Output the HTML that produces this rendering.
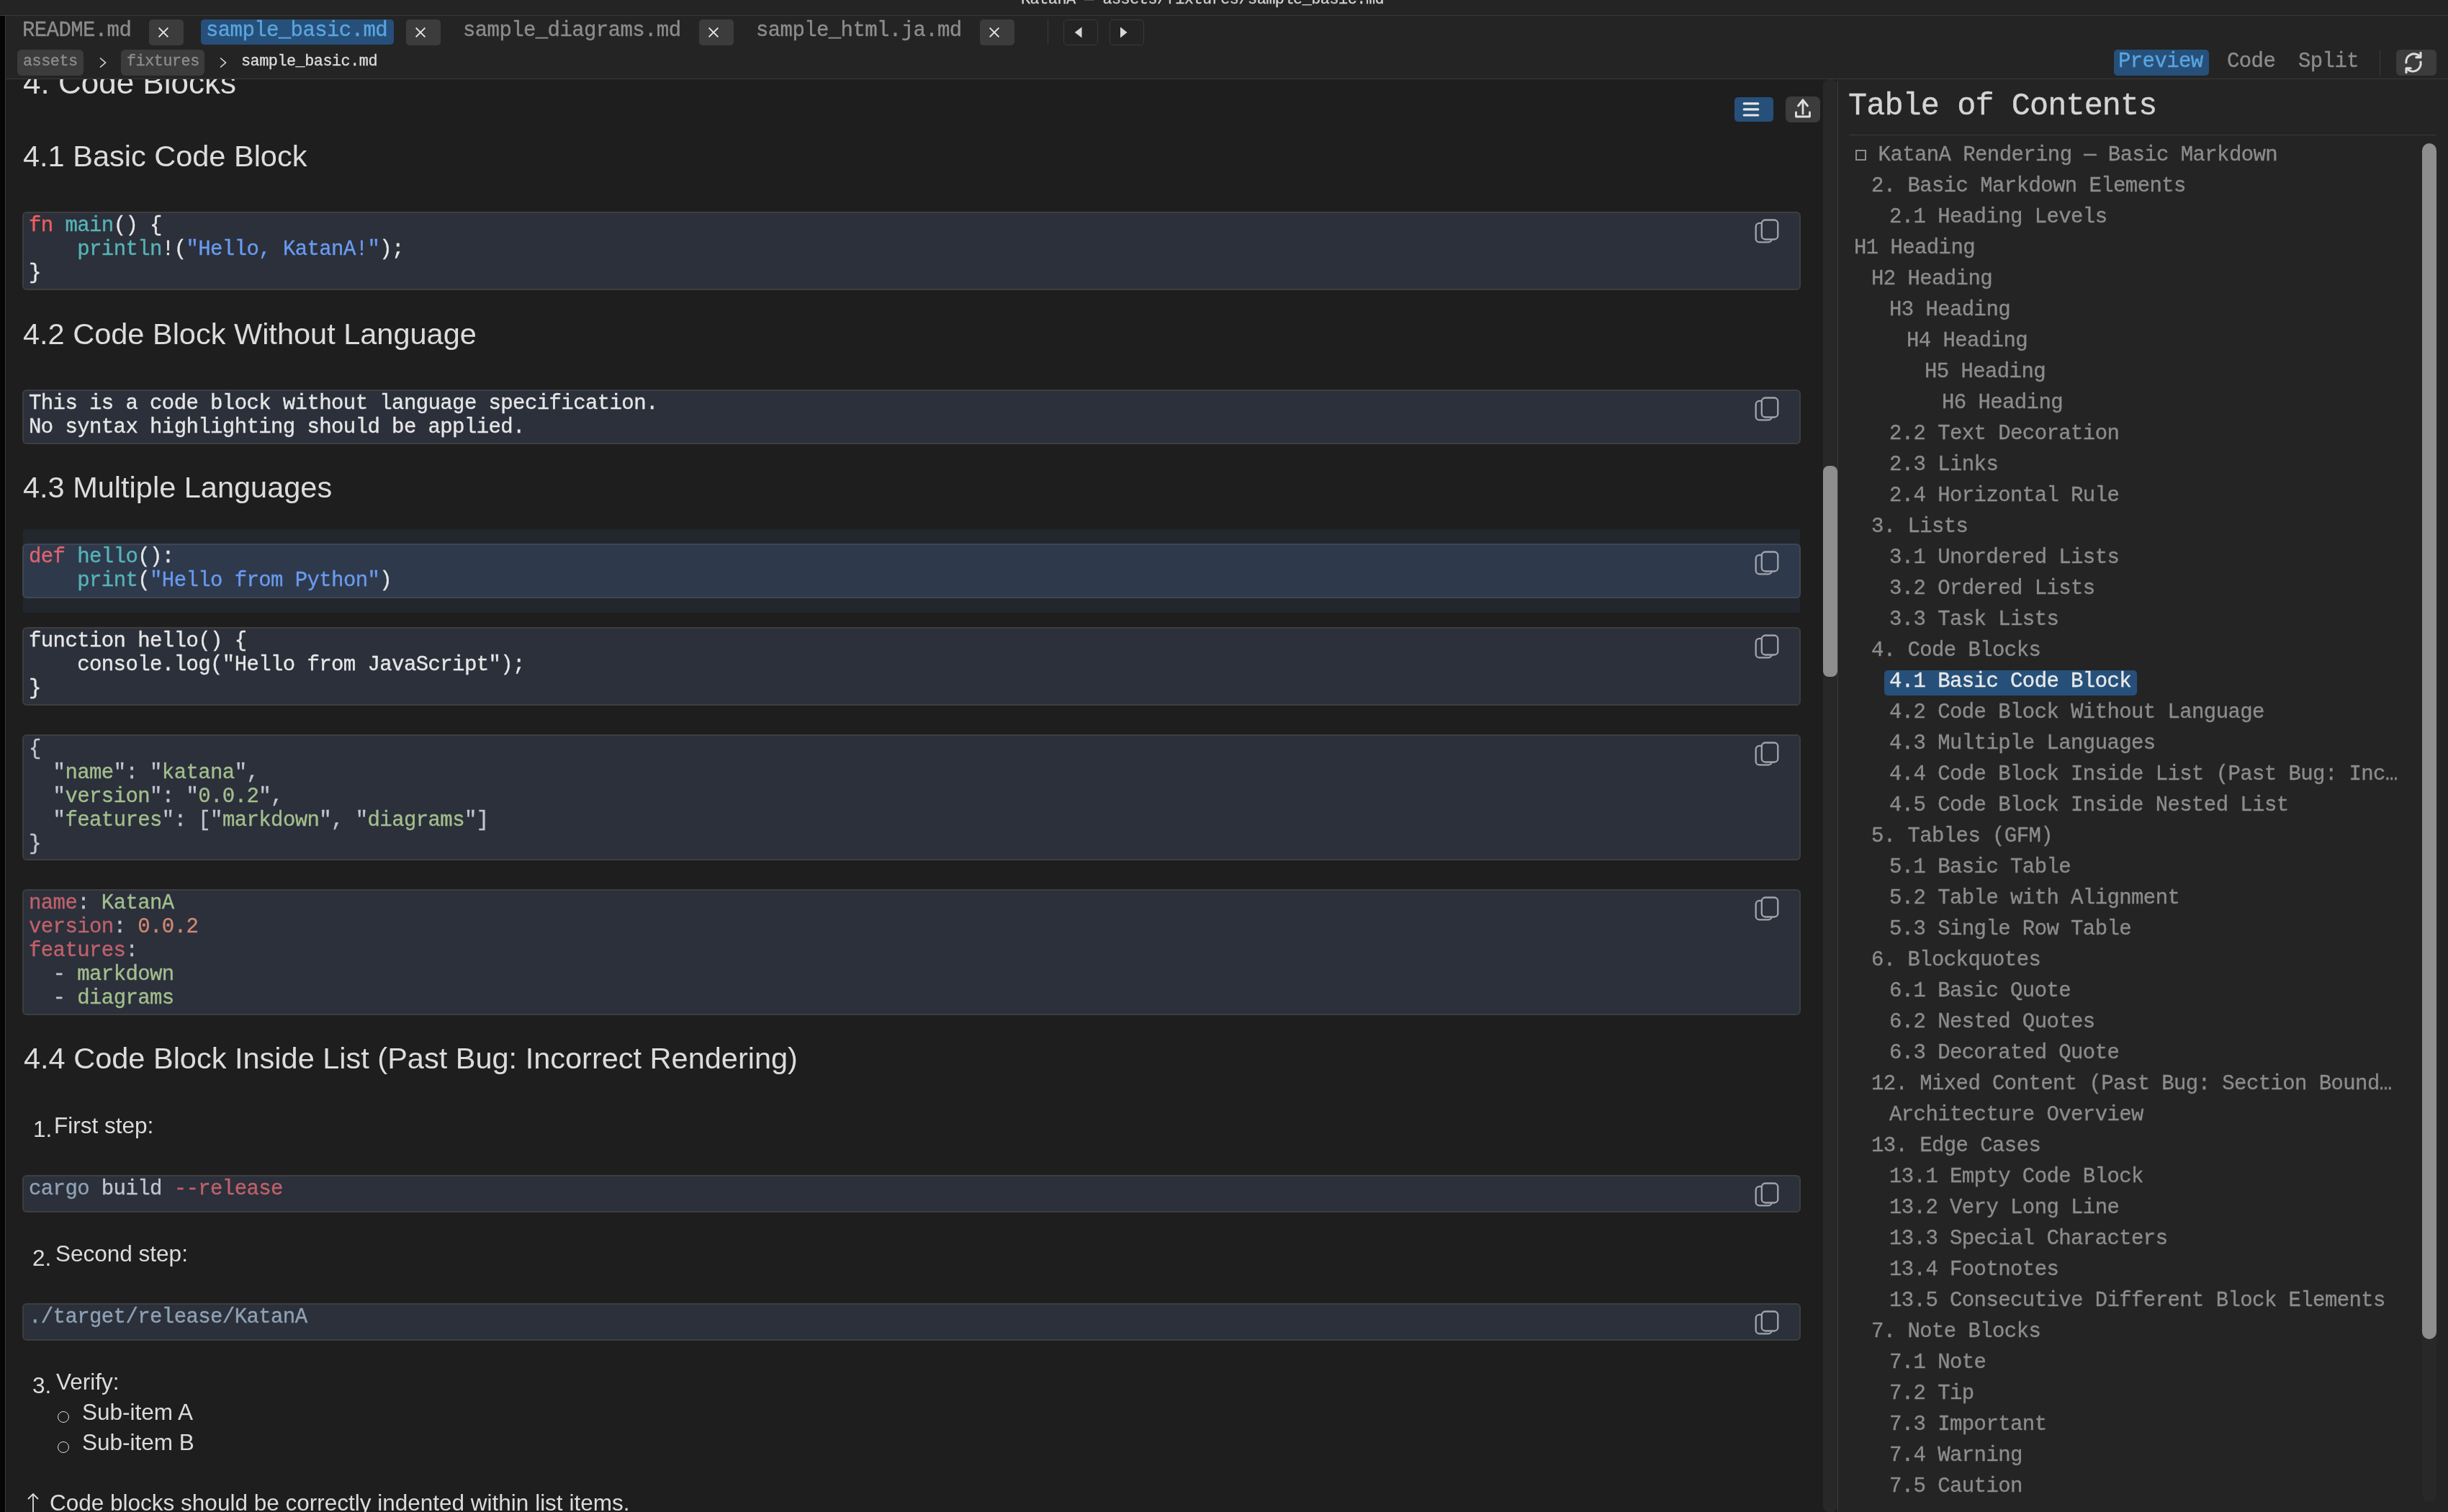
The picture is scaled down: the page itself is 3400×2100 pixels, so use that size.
<!DOCTYPE html>
<html><head><meta charset="utf-8"><style>
html,body{margin:0;padding:0;}
body{width:3400px;height:2100px;overflow:hidden;position:relative;background:#1e1e1e;font-family:"Liberation Sans",sans-serif;}
.t{will-change:transform;}
</style></head><body>
<div style="position:absolute;left:0px;top:0px;width:3400px;height:21px;background:#242424;border-radius:0px;"></div>
<div style="position:absolute;left:0px;top:21px;width:3400px;height:1px;background:#3a3a3a;border-radius:0px;"></div>
<div style="position:absolute;left:0px;top:22px;width:3400px;height:87px;background:#242424;border-radius:0px;"></div>
<div style="position:absolute;left:0px;top:109px;width:3400px;height:1px;background:#3a3a3a;border-radius:0px;"></div>
<div style="position:absolute;left:0px;top:22px;width:7px;height:2078px;background:#050505;border-radius:0px;"></div>
<div style="position:absolute;left:7px;top:22px;width:1px;height:2078px;background:#3a3a3a;border-radius:0px;"></div>
<div style="position:absolute;left:8px;top:110px;width:2524px;height:1990px;background:#1e1e1e;border-radius:0px;"></div>
<div style="position:absolute;left:2553px;top:110px;width:847px;height:1990px;background:#242424;border-radius:0px;"></div>
<div style="position:absolute;left:2552px;top:110px;width:1px;height:1990px;background:#3a3a3a;border-radius:0px;"></div>
<div style="position:absolute;left:2532px;top:110px;width:20px;height:1990px;background:#282828;border-radius:8px;"></div>
<div style="position:absolute;left:2532px;top:647px;width:20px;height:293px;background:#8e8e8e;border-radius:8px;"></div>
<div style="position:absolute;left:207px;top:27px;width:48px;height:36px;background:#3c3c3c;border-radius:5px;"></div>
<svg style="position:absolute;left:219.0px;top:37px" width="16" height="16" viewBox="0 0 16 16"><path d="M1.6 1.6L14.4 14.4M14.4 1.6L1.6 14.4" stroke="#e6e6e6" stroke-width="1.9" fill="none"/></svg>
<div style="position:absolute;left:279px;top:27px;width:268px;height:35px;background:#26507a;border-radius:5px;"></div>
<div style="position:absolute;left:564px;top:27px;width:48px;height:36px;background:#3c3c3c;border-radius:5px;"></div>
<svg style="position:absolute;left:576.0px;top:37px" width="16" height="16" viewBox="0 0 16 16"><path d="M1.6 1.6L14.4 14.4M14.4 1.6L1.6 14.4" stroke="#e6e6e6" stroke-width="1.9" fill="none"/></svg>
<div style="position:absolute;left:971px;top:27px;width:48px;height:36px;background:#3c3c3c;border-radius:5px;"></div>
<svg style="position:absolute;left:983.0px;top:37px" width="16" height="16" viewBox="0 0 16 16"><path d="M1.6 1.6L14.4 14.4M14.4 1.6L1.6 14.4" stroke="#e6e6e6" stroke-width="1.9" fill="none"/></svg>
<div style="position:absolute;left:1361px;top:27px;width:48px;height:36px;background:#3c3c3c;border-radius:5px;"></div>
<svg style="position:absolute;left:1373.0px;top:37px" width="16" height="16" viewBox="0 0 16 16"><path d="M1.6 1.6L14.4 14.4M14.4 1.6L1.6 14.4" stroke="#e6e6e6" stroke-width="1.9" fill="none"/></svg>
<div style="position:absolute;left:1455px;top:26px;width:1px;height:36px;background:#3a3a3a;border-radius:0px;"></div>
<div style="position:absolute;left:1477px;top:27px;width:48px;height:36px;background:none;border-radius:5px;border:1px solid #3a3a3a;box-sizing:border-box;"></div>
<div style="position:absolute;left:1541px;top:27px;width:48px;height:36px;background:none;border-radius:5px;border:1px solid #3a3a3a;box-sizing:border-box;"></div>
<svg style="position:absolute;left:1490px;top:35px" width="14" height="20"><path d="M12.5 2.5L12.5 17.4L2.7 10Z" fill="#d8d8d8"/></svg>
<svg style="position:absolute;left:1554px;top:35px" width="14" height="20"><path d="M2 2.5L2 17.4L11.5 10Z" fill="#d8d8d8"/></svg>
<div style="position:absolute;left:24px;top:69px;width:92px;height:36px;background:#3c3c3c;border-radius:6px;"></div>
<svg style="position:absolute;left:137px;top:79px" width="12" height="16"><path d="M2 1.5L9.5 8L2 14.5" stroke="#d8d8d8" stroke-width="1.6" fill="none"/></svg>
<div style="position:absolute;left:168px;top:69px;width:116px;height:36px;background:#3c3c3c;border-radius:6px;"></div>
<svg style="position:absolute;left:304px;top:79px" width="12" height="16"><path d="M2 1.5L9.5 8L2 14.5" stroke="#d8d8d8" stroke-width="1.6" fill="none"/></svg>
<div style="position:absolute;left:2936px;top:69px;width:132px;height:36px;background:#26507a;border-radius:5px;"></div>
<div style="position:absolute;left:3305px;top:69px;width:1px;height:36px;background:#3a3a3a;border-radius:0px;"></div>
<div style="position:absolute;left:3328px;top:69px;width:56px;height:36px;background:#3c3c3c;border-radius:6px;"></div>
<svg style="position:absolute;left:3330px;top:68px" width="40" height="40"><g stroke="#dcdcdc" stroke-width="3.1" fill="none" stroke-linecap="round" stroke-linejoin="round"><path d="M11.9 19A11 11 0 0 1 30.8 10.2"/><path d="M32 5.2V11.6H25.8"/><path d="M32 18A11 11 0 0 1 13.2 27.6"/><path d="M12 32.8V26.8H18.2"/></g></svg>
<div style="position:absolute;left:8px;top:110px;width:2524px;height:60px;overflow:hidden">
<div class="t" style="position:absolute;left:23.8px;top:-23.0px;font-family:'Liberation Sans';font-size:44px;line-height:55px;color:#dcdcdc;white-space:pre;">4. Code Blocks</div>
</div>
<div style="position:absolute;left:2409px;top:135px;width:54px;height:34px;background:#26507a;border-radius:5px;"></div>
<svg style="position:absolute;left:2418px;top:140px" width="28" height="24"><g stroke="#e8e6e3" stroke-width="3.2" stroke-linecap="round"><path d="M4.3 3.9H23.7"/><path d="M4.3 11.9H23.7"/><path d="M4.3 20H23.7"/></g></svg>
<div style="position:absolute;left:2480px;top:134px;width:48px;height:36px;background:#3c3c3c;border-radius:7px;"></div>
<svg style="position:absolute;left:2490px;top:136px" width="28" height="30"><g stroke="#e0e0e0" stroke-width="2.8" fill="none" stroke-linecap="round" stroke-linejoin="round"><path d="M14 3V22"/><path d="M7.5 11L14 3L20.5 11"/><path d="M4.5 20V26H23.5V20"/></g></svg>
<div style="position:absolute;left:31px;top:294px;width:2470px;height:109px;background:#2b303b;border-radius:6px;border:2px solid #3e3e3e;box-sizing:border-box;"></div>
<svg style="position:absolute;left:2430px;top:294px" width="50" height="50"><g stroke="#a0a4ab" stroke-width="2.3"><rect x="8.7" y="15.9" width="22.2" height="26.5" rx="5" fill="none"/><rect x="16.8" y="11.5" width="22.5" height="27" rx="5" fill="#2b303b"/></g></svg>
<div style="position:absolute;left:31px;top:541px;width:2470px;height:76px;background:#2b303b;border-radius:6px;border:2px solid #3e3e3e;box-sizing:border-box;"></div>
<svg style="position:absolute;left:2430px;top:541px" width="50" height="50"><g stroke="#a0a4ab" stroke-width="2.3"><rect x="8.7" y="15.9" width="22.2" height="26.5" rx="5" fill="none"/><rect x="16.8" y="11.5" width="22.5" height="27" rx="5" fill="#2b303b"/></g></svg>
<div style="position:absolute;left:32px;top:735px;width:2468px;height:116px;background:#22272e;border-radius:3px;"></div>
<div style="position:absolute;left:31px;top:755px;width:2470px;height:76px;background:#2e3a4c;border-radius:6px;border:2px solid #3f4650;box-sizing:border-box;"></div>
<svg style="position:absolute;left:2430px;top:755px" width="50" height="50"><g stroke="#a0a4ab" stroke-width="2.3"><rect x="8.7" y="15.9" width="22.2" height="26.5" rx="5" fill="none"/><rect x="16.8" y="11.5" width="22.5" height="27" rx="5" fill="#2e3a4c"/></g></svg>
<div style="position:absolute;left:31px;top:871px;width:2470px;height:109px;background:#2b303b;border-radius:6px;border:2px solid #3e3e3e;box-sizing:border-box;"></div>
<svg style="position:absolute;left:2430px;top:871px" width="50" height="50"><g stroke="#a0a4ab" stroke-width="2.3"><rect x="8.7" y="15.9" width="22.2" height="26.5" rx="5" fill="none"/><rect x="16.8" y="11.5" width="22.5" height="27" rx="5" fill="#2b303b"/></g></svg>
<div style="position:absolute;left:31px;top:1020px;width:2470px;height:175px;background:#2b303b;border-radius:6px;border:2px solid #3e3e3e;box-sizing:border-box;"></div>
<svg style="position:absolute;left:2430px;top:1020px" width="50" height="50"><g stroke="#a0a4ab" stroke-width="2.3"><rect x="8.7" y="15.9" width="22.2" height="26.5" rx="5" fill="none"/><rect x="16.8" y="11.5" width="22.5" height="27" rx="5" fill="#2b303b"/></g></svg>
<div style="position:absolute;left:31px;top:1235px;width:2470px;height:175px;background:#2b303b;border-radius:6px;border:2px solid #3e3e3e;box-sizing:border-box;"></div>
<svg style="position:absolute;left:2430px;top:1235px" width="50" height="50"><g stroke="#a0a4ab" stroke-width="2.3"><rect x="8.7" y="15.9" width="22.2" height="26.5" rx="5" fill="none"/><rect x="16.8" y="11.5" width="22.5" height="27" rx="5" fill="#2b303b"/></g></svg>
<div style="position:absolute;left:31px;top:1632px;width:2470px;height:52px;background:#2b303b;border-radius:6px;border:2px solid #3e3e3e;box-sizing:border-box;"></div>
<svg style="position:absolute;left:2430px;top:1632px" width="50" height="50"><g stroke="#a0a4ab" stroke-width="2.3"><rect x="8.7" y="15.9" width="22.2" height="26.5" rx="5" fill="none"/><rect x="16.8" y="11.5" width="22.5" height="27" rx="5" fill="#2b303b"/></g></svg>
<div style="position:absolute;left:31px;top:1810px;width:2470px;height:52px;background:#2b303b;border-radius:6px;border:2px solid #3e3e3e;box-sizing:border-box;"></div>
<svg style="position:absolute;left:2430px;top:1810px" width="50" height="50"><g stroke="#a0a4ab" stroke-width="2.3"><rect x="8.7" y="15.9" width="22.2" height="26.5" rx="5" fill="none"/><rect x="16.8" y="11.5" width="22.5" height="27" rx="5" fill="#2b303b"/></g></svg>
<div style="position:absolute;left:80px;top:1960px;width:16px;height:16px;border:1.5px solid #dcdcdc;border-radius:50%;box-sizing:border-box"></div>
<div style="position:absolute;left:80px;top:2001.5px;width:16px;height:16px;border:1.5px solid #dcdcdc;border-radius:50%;box-sizing:border-box"></div>
<svg style="position:absolute;left:36px;top:2072px" width="20" height="30"><g stroke="#dcdcdc" stroke-width="1.8" fill="none"><path d="M10 3V30"/><path d="M3 10L10 3L17 10"/></g></svg>
<div style="position:absolute;left:2568px;top:187px;width:816px;height:1px;background:#3a3a3a;border-radius:0px;"></div>
<div style="position:absolute;left:3364px;top:199px;width:20px;height:1887px;background:#282828;border-radius:10px;"></div>
<div style="position:absolute;left:3364px;top:199px;width:20px;height:1661px;background:#8e8e8e;border-radius:10px;"></div>
<div style="position:absolute;left:2577px;top:208px;width:15px;height:15px;background:none;border-radius:0px;border:2px solid #8c8c8c;box-sizing:border-box;"></div>
<div style="position:absolute;left:2617px;top:931px;width:351px;height:35px;background:#26507a;border-radius:5px;"></div>
<div class="t" style="position:absolute;left:1418.0px;top:-14.5px;font-family:'Liberation Mono';font-size:21.75px;line-height:27px;color:#d0d0d0;white-space:pre;letter-spacing:-0.450px;-webkit-text-stroke:0.35px currentColor;">KatanA — assets/fixtures/sample_basic.md</div>
<div class="t" style="position:absolute;left:30.8px;top:25.0px;font-family:'Liberation Mono';font-size:29.0px;line-height:36px;color:#8c8c8c;white-space:pre;letter-spacing:-0.600px;-webkit-text-stroke:0.35px currentColor;">README.md</div>
<div class="t" style="position:absolute;left:285.7px;top:25.0px;font-family:'Liberation Mono';font-size:29.0px;line-height:36px;color:#5aa5e0;white-space:pre;letter-spacing:-0.600px;-webkit-text-stroke:0.35px currentColor;">sample_basic.md</div>
<div class="t" style="position:absolute;left:642.7px;top:25.0px;font-family:'Liberation Mono';font-size:29.0px;line-height:36px;color:#8c8c8c;white-space:pre;letter-spacing:-0.600px;-webkit-text-stroke:0.35px currentColor;">sample_diagrams.md</div>
<div class="t" style="position:absolute;left:1050.4px;top:25.0px;font-family:'Liberation Mono';font-size:29.0px;line-height:36px;color:#8c8c8c;white-space:pre;letter-spacing:-0.600px;-webkit-text-stroke:0.35px currentColor;">sample_html.ja.md</div>
<div class="t" style="position:absolute;left:32.0px;top:72.0px;font-family:'Liberation Mono';font-size:21.75px;line-height:27px;color:#8c8c8c;white-space:pre;letter-spacing:-0.450px;-webkit-text-stroke:0.35px currentColor;">assets</div>
<div class="t" style="position:absolute;left:176.4px;top:72.0px;font-family:'Liberation Mono';font-size:21.75px;line-height:27px;color:#8c8c8c;white-space:pre;letter-spacing:-0.450px;-webkit-text-stroke:0.35px currentColor;">fixtures</div>
<div class="t" style="position:absolute;left:335.3px;top:72.0px;font-family:'Liberation Mono';font-size:21.75px;line-height:27px;color:#dcdcdc;white-space:pre;letter-spacing:-0.450px;-webkit-text-stroke:0.35px currentColor;">sample_basic.md</div>
<div class="t" style="position:absolute;left:2942.3px;top:68.2px;font-family:'Liberation Mono';font-size:29.0px;line-height:36px;color:#5aa5e0;white-space:pre;letter-spacing:-0.600px;-webkit-text-stroke:0.35px currentColor;">Preview</div>
<div class="t" style="position:absolute;left:3093.0px;top:68.2px;font-family:'Liberation Mono';font-size:29.0px;line-height:36px;color:#8c8c8c;white-space:pre;letter-spacing:-0.600px;-webkit-text-stroke:0.35px currentColor;">Code</div>
<div class="t" style="position:absolute;left:3192.4px;top:68.2px;font-family:'Liberation Mono';font-size:29.0px;line-height:36px;color:#8c8c8c;white-space:pre;letter-spacing:-0.600px;-webkit-text-stroke:0.35px currentColor;">Split</div>
<div class="t" style="position:absolute;left:31.9px;top:190.6px;font-family:'Liberation Sans';font-size:41.5px;line-height:52px;color:#dcdcdc;white-space:pre;">4.1 Basic Code Block</div>
<div class="t" style="position:absolute;left:40.3px;top:296.0px;font-family:'Liberation Mono';font-size:29.0px;line-height:36px;color:#dcdcdc;white-space:pre;letter-spacing:-0.600px;-webkit-text-stroke:0.35px currentColor;"><span style="color:#f0605c">fn</span><span style="color:#e6e6e6"> </span><span style="color:#56b4b8">main</span><span style="color:#e6e6e6">() {</span></div>
<div class="t" style="position:absolute;left:40.3px;top:329.0px;font-family:'Liberation Mono';font-size:29.0px;line-height:36px;color:#dcdcdc;white-space:pre;letter-spacing:-0.600px;-webkit-text-stroke:0.35px currentColor;"><span style="color:#e6e6e6">    </span><span style="color:#56b4b8">println</span><span style="color:#e6e6e6">!(</span><span style="color:#6a9af0">&quot;Hello, KatanA!&quot;</span><span style="color:#e6e6e6">);</span></div>
<div class="t" style="position:absolute;left:40.3px;top:362.0px;font-family:'Liberation Mono';font-size:29.0px;line-height:36px;color:#dcdcdc;white-space:pre;letter-spacing:-0.600px;-webkit-text-stroke:0.35px currentColor;"><span style="color:#e6e6e6">}</span></div>
<div class="t" style="position:absolute;left:31.5px;top:437.8px;font-family:'Liberation Sans';font-size:41.5px;line-height:52px;color:#dcdcdc;white-space:pre;">4.2 Code Block Without Language</div>
<div class="t" style="position:absolute;left:40.3px;top:543.4px;font-family:'Liberation Mono';font-size:29.0px;line-height:36px;color:#dcdcdc;white-space:pre;letter-spacing:-0.600px;-webkit-text-stroke:0.35px currentColor;"><span style="color:#e6e6e6">This is a code block without language specification.</span></div>
<div class="t" style="position:absolute;left:40.3px;top:576.4px;font-family:'Liberation Mono';font-size:29.0px;line-height:36px;color:#dcdcdc;white-space:pre;letter-spacing:-0.600px;-webkit-text-stroke:0.35px currentColor;"><span style="color:#e6e6e6">No syntax highlighting should be applied.</span></div>
<div class="t" style="position:absolute;left:31.7px;top:651.4px;font-family:'Liberation Sans';font-size:41.5px;line-height:52px;color:#dcdcdc;white-space:pre;">4.3 Multiple Languages</div>
<div class="t" style="position:absolute;left:40.3px;top:756.2px;font-family:'Liberation Mono';font-size:29.0px;line-height:36px;color:#dcdcdc;white-space:pre;letter-spacing:-0.600px;-webkit-text-stroke:0.35px currentColor;"><span style="color:#e0636c">def</span><span style="color:#e6e6e6"> </span><span style="color:#56b4b8">hello</span><span style="color:#e6e6e6">():</span></div>
<div class="t" style="position:absolute;left:40.3px;top:789.2px;font-family:'Liberation Mono';font-size:29.0px;line-height:36px;color:#dcdcdc;white-space:pre;letter-spacing:-0.600px;-webkit-text-stroke:0.35px currentColor;"><span style="color:#e6e6e6">    </span><span style="color:#56b4b8">print</span><span style="color:#e6e6e6">(</span><span style="color:#6a9af0">&quot;Hello from Python&quot;</span><span style="color:#e6e6e6">)</span></div>
<div class="t" style="position:absolute;left:40.3px;top:873.4px;font-family:'Liberation Mono';font-size:29.0px;line-height:36px;color:#dcdcdc;white-space:pre;letter-spacing:-0.600px;-webkit-text-stroke:0.35px currentColor;"><span style="color:#e6e6e6">function hello() {</span></div>
<div class="t" style="position:absolute;left:40.3px;top:906.4px;font-family:'Liberation Mono';font-size:29.0px;line-height:36px;color:#dcdcdc;white-space:pre;letter-spacing:-0.600px;-webkit-text-stroke:0.35px currentColor;"><span style="color:#e6e6e6">    console.log(&quot;Hello from JavaScript&quot;);</span></div>
<div class="t" style="position:absolute;left:40.3px;top:939.4px;font-family:'Liberation Mono';font-size:29.0px;line-height:36px;color:#dcdcdc;white-space:pre;letter-spacing:-0.600px;-webkit-text-stroke:0.35px currentColor;"><span style="color:#e6e6e6">}</span></div>
<div class="t" style="position:absolute;left:40.3px;top:1023.2px;font-family:'Liberation Mono';font-size:29.0px;line-height:36px;color:#dcdcdc;white-space:pre;letter-spacing:-0.600px;-webkit-text-stroke:0.35px currentColor;"><span style="color:#c0c5ce">{</span></div>
<div class="t" style="position:absolute;left:40.3px;top:1056.2px;font-family:'Liberation Mono';font-size:29.0px;line-height:36px;color:#dcdcdc;white-space:pre;letter-spacing:-0.600px;-webkit-text-stroke:0.35px currentColor;"><span style="color:#c0c5ce">  &quot;</span><span style="color:#a3be8c">name</span><span style="color:#c0c5ce">&quot;: &quot;</span><span style="color:#a3be8c">katana</span><span style="color:#c0c5ce">&quot;,</span></div>
<div class="t" style="position:absolute;left:40.3px;top:1089.2px;font-family:'Liberation Mono';font-size:29.0px;line-height:36px;color:#dcdcdc;white-space:pre;letter-spacing:-0.600px;-webkit-text-stroke:0.35px currentColor;"><span style="color:#c0c5ce">  &quot;</span><span style="color:#a3be8c">version</span><span style="color:#c0c5ce">&quot;: &quot;</span><span style="color:#a3be8c">0.0.2</span><span style="color:#c0c5ce">&quot;,</span></div>
<div class="t" style="position:absolute;left:40.3px;top:1122.2px;font-family:'Liberation Mono';font-size:29.0px;line-height:36px;color:#dcdcdc;white-space:pre;letter-spacing:-0.600px;-webkit-text-stroke:0.35px currentColor;"><span style="color:#c0c5ce">  &quot;</span><span style="color:#a3be8c">features</span><span style="color:#c0c5ce">&quot;: [&quot;</span><span style="color:#a3be8c">markdown</span><span style="color:#c0c5ce">&quot;, &quot;</span><span style="color:#a3be8c">diagrams</span><span style="color:#c0c5ce">&quot;]</span></div>
<div class="t" style="position:absolute;left:40.3px;top:1155.2px;font-family:'Liberation Mono';font-size:29.0px;line-height:36px;color:#dcdcdc;white-space:pre;letter-spacing:-0.600px;-webkit-text-stroke:0.35px currentColor;"><span style="color:#c0c5ce">}</span></div>
<div class="t" style="position:absolute;left:40.3px;top:1236.8px;font-family:'Liberation Mono';font-size:29.0px;line-height:36px;color:#dcdcdc;white-space:pre;letter-spacing:-0.600px;-webkit-text-stroke:0.35px currentColor;"><span style="color:#bf616a">name</span><span style="color:#c0c5ce">: </span><span style="color:#a3be8c">KatanA</span></div>
<div class="t" style="position:absolute;left:40.3px;top:1269.8px;font-family:'Liberation Mono';font-size:29.0px;line-height:36px;color:#dcdcdc;white-space:pre;letter-spacing:-0.600px;-webkit-text-stroke:0.35px currentColor;"><span style="color:#bf616a">version</span><span style="color:#c0c5ce">: </span><span style="color:#d08770">0.0.2</span></div>
<div class="t" style="position:absolute;left:40.3px;top:1302.8px;font-family:'Liberation Mono';font-size:29.0px;line-height:36px;color:#dcdcdc;white-space:pre;letter-spacing:-0.600px;-webkit-text-stroke:0.35px currentColor;"><span style="color:#bf616a">features</span><span style="color:#c0c5ce">:</span></div>
<div class="t" style="position:absolute;left:40.3px;top:1335.8px;font-family:'Liberation Mono';font-size:29.0px;line-height:36px;color:#dcdcdc;white-space:pre;letter-spacing:-0.600px;-webkit-text-stroke:0.35px currentColor;"><span style="color:#c0c5ce">  - </span><span style="color:#a3be8c">markdown</span></div>
<div class="t" style="position:absolute;left:40.3px;top:1368.8px;font-family:'Liberation Mono';font-size:29.0px;line-height:36px;color:#dcdcdc;white-space:pre;letter-spacing:-0.600px;-webkit-text-stroke:0.35px currentColor;"><span style="color:#c0c5ce">  - </span><span style="color:#a3be8c">diagrams</span></div>
<div class="t" style="position:absolute;left:32.5px;top:1444.2px;font-family:'Liberation Sans';font-size:41.5px;line-height:52px;color:#dcdcdc;white-space:pre;">4.4 Code Block Inside List (Past Bug: Incorrect Rendering)</div>
<div class="t" style="position:absolute;left:46.0px;top:1549.3px;font-family:'Liberation Sans';font-size:31.5px;line-height:39px;color:#dcdcdc;white-space:pre;">1.</div>
<div class="t" style="position:absolute;left:75.0px;top:1544.0px;font-family:'Liberation Sans';font-size:31.5px;line-height:39px;color:#dcdcdc;white-space:pre;">First step:</div>
<div class="t" style="position:absolute;left:40.3px;top:1634.0px;font-family:'Liberation Mono';font-size:29.0px;line-height:36px;color:#dcdcdc;white-space:pre;letter-spacing:-0.600px;-webkit-text-stroke:0.35px currentColor;"><span style="color:#8fa1b3">cargo</span><span style="color:#c0c5ce"> build </span><span style="color:#bf616a">--release</span></div>
<div class="t" style="position:absolute;left:45.0px;top:1727.7px;font-family:'Liberation Sans';font-size:31.5px;line-height:39px;color:#dcdcdc;white-space:pre;">2.</div>
<div class="t" style="position:absolute;left:76.8px;top:1722.1px;font-family:'Liberation Sans';font-size:31.5px;line-height:39px;color:#dcdcdc;white-space:pre;">Second step:</div>
<div class="t" style="position:absolute;left:40.3px;top:1812.0px;font-family:'Liberation Mono';font-size:29.0px;line-height:36px;color:#dcdcdc;white-space:pre;letter-spacing:-0.600px;-webkit-text-stroke:0.35px currentColor;"><span style="color:#8fa1b3">./target/release/KatanA</span></div>
<div class="t" style="position:absolute;left:45.0px;top:1905.4px;font-family:'Liberation Sans';font-size:31.5px;line-height:39px;color:#dcdcdc;white-space:pre;">3.</div>
<div class="t" style="position:absolute;left:77.7px;top:1900.2px;font-family:'Liberation Sans';font-size:31.5px;line-height:39px;color:#dcdcdc;white-space:pre;">Verify:</div>
<div class="t" style="position:absolute;left:114.4px;top:1942.0px;font-family:'Liberation Sans';font-size:31.5px;line-height:39px;color:#dcdcdc;white-space:pre;">Sub-item A</div>
<div class="t" style="position:absolute;left:114.4px;top:1984.3px;font-family:'Liberation Sans';font-size:31.5px;line-height:39px;color:#dcdcdc;white-space:pre;">Sub-item B</div>
<div class="t" style="position:absolute;left:68.7px;top:2068.0px;font-family:'Liberation Sans';font-size:31.5px;line-height:39px;color:#dcdcdc;white-space:pre;">Code blocks should be correctly indented within list items.</div>
<div class="t" style="position:absolute;left:2567.1px;top:121.2px;font-family:'Liberation Mono';font-size:43.5px;line-height:54px;color:#d4d4d4;white-space:pre;letter-spacing:-0.900px;-webkit-text-stroke:0.35px currentColor;">Table of Contents</div>
<div class="t" style="position:absolute;left:2575.0px;top:198.0px;font-family:'Liberation Mono';font-size:29.0px;line-height:36px;color:#8c8c8c;white-space:pre;letter-spacing:-0.600px;-webkit-text-stroke:0.35px currentColor;">  KatanA Rendering — Basic Markdown</div>
<div class="t" style="position:absolute;left:2599.4px;top:241.0px;font-family:'Liberation Mono';font-size:29.0px;line-height:36px;color:#8c8c8c;white-space:pre;letter-spacing:-0.600px;-webkit-text-stroke:0.35px currentColor;">2. Basic Markdown Elements</div>
<div class="t" style="position:absolute;left:2623.8px;top:284.0px;font-family:'Liberation Mono';font-size:29.0px;line-height:36px;color:#8c8c8c;white-space:pre;letter-spacing:-0.600px;-webkit-text-stroke:0.35px currentColor;">2.1 Heading Levels</div>
<div class="t" style="position:absolute;left:2575.0px;top:327.0px;font-family:'Liberation Mono';font-size:29.0px;line-height:36px;color:#8c8c8c;white-space:pre;letter-spacing:-0.600px;-webkit-text-stroke:0.35px currentColor;">H1 Heading</div>
<div class="t" style="position:absolute;left:2599.4px;top:370.0px;font-family:'Liberation Mono';font-size:29.0px;line-height:36px;color:#8c8c8c;white-space:pre;letter-spacing:-0.600px;-webkit-text-stroke:0.35px currentColor;">H2 Heading</div>
<div class="t" style="position:absolute;left:2623.8px;top:413.0px;font-family:'Liberation Mono';font-size:29.0px;line-height:36px;color:#8c8c8c;white-space:pre;letter-spacing:-0.600px;-webkit-text-stroke:0.35px currentColor;">H3 Heading</div>
<div class="t" style="position:absolute;left:2648.2px;top:456.0px;font-family:'Liberation Mono';font-size:29.0px;line-height:36px;color:#8c8c8c;white-space:pre;letter-spacing:-0.600px;-webkit-text-stroke:0.35px currentColor;">H4 Heading</div>
<div class="t" style="position:absolute;left:2672.6px;top:499.0px;font-family:'Liberation Mono';font-size:29.0px;line-height:36px;color:#8c8c8c;white-space:pre;letter-spacing:-0.600px;-webkit-text-stroke:0.35px currentColor;">H5 Heading</div>
<div class="t" style="position:absolute;left:2697.0px;top:542.0px;font-family:'Liberation Mono';font-size:29.0px;line-height:36px;color:#8c8c8c;white-space:pre;letter-spacing:-0.600px;-webkit-text-stroke:0.35px currentColor;">H6 Heading</div>
<div class="t" style="position:absolute;left:2623.8px;top:585.0px;font-family:'Liberation Mono';font-size:29.0px;line-height:36px;color:#8c8c8c;white-space:pre;letter-spacing:-0.600px;-webkit-text-stroke:0.35px currentColor;">2.2 Text Decoration</div>
<div class="t" style="position:absolute;left:2623.8px;top:628.0px;font-family:'Liberation Mono';font-size:29.0px;line-height:36px;color:#8c8c8c;white-space:pre;letter-spacing:-0.600px;-webkit-text-stroke:0.35px currentColor;">2.3 Links</div>
<div class="t" style="position:absolute;left:2623.8px;top:671.0px;font-family:'Liberation Mono';font-size:29.0px;line-height:36px;color:#8c8c8c;white-space:pre;letter-spacing:-0.600px;-webkit-text-stroke:0.35px currentColor;">2.4 Horizontal Rule</div>
<div class="t" style="position:absolute;left:2599.4px;top:714.0px;font-family:'Liberation Mono';font-size:29.0px;line-height:36px;color:#8c8c8c;white-space:pre;letter-spacing:-0.600px;-webkit-text-stroke:0.35px currentColor;">3. Lists</div>
<div class="t" style="position:absolute;left:2623.8px;top:757.0px;font-family:'Liberation Mono';font-size:29.0px;line-height:36px;color:#8c8c8c;white-space:pre;letter-spacing:-0.600px;-webkit-text-stroke:0.35px currentColor;">3.1 Unordered Lists</div>
<div class="t" style="position:absolute;left:2623.8px;top:800.0px;font-family:'Liberation Mono';font-size:29.0px;line-height:36px;color:#8c8c8c;white-space:pre;letter-spacing:-0.600px;-webkit-text-stroke:0.35px currentColor;">3.2 Ordered Lists</div>
<div class="t" style="position:absolute;left:2623.8px;top:843.0px;font-family:'Liberation Mono';font-size:29.0px;line-height:36px;color:#8c8c8c;white-space:pre;letter-spacing:-0.600px;-webkit-text-stroke:0.35px currentColor;">3.3 Task Lists</div>
<div class="t" style="position:absolute;left:2599.4px;top:886.0px;font-family:'Liberation Mono';font-size:29.0px;line-height:36px;color:#8c8c8c;white-space:pre;letter-spacing:-0.600px;-webkit-text-stroke:0.35px currentColor;">4. Code Blocks</div>
<div class="t" style="position:absolute;left:2623.8px;top:929.0px;font-family:'Liberation Mono';font-size:29.0px;line-height:36px;color:#e8e8e8;white-space:pre;letter-spacing:-0.600px;-webkit-text-stroke:0.35px currentColor;">4.1 Basic Code Block</div>
<div class="t" style="position:absolute;left:2623.8px;top:972.0px;font-family:'Liberation Mono';font-size:29.0px;line-height:36px;color:#8c8c8c;white-space:pre;letter-spacing:-0.600px;-webkit-text-stroke:0.35px currentColor;">4.2 Code Block Without Language</div>
<div class="t" style="position:absolute;left:2623.8px;top:1015.0px;font-family:'Liberation Mono';font-size:29.0px;line-height:36px;color:#8c8c8c;white-space:pre;letter-spacing:-0.600px;-webkit-text-stroke:0.35px currentColor;">4.3 Multiple Languages</div>
<div class="t" style="position:absolute;left:2623.8px;top:1058.0px;font-family:'Liberation Mono';font-size:29.0px;line-height:36px;color:#8c8c8c;white-space:pre;letter-spacing:-0.600px;-webkit-text-stroke:0.35px currentColor;">4.4 Code Block Inside List (Past Bug: Inc…</div>
<div class="t" style="position:absolute;left:2623.8px;top:1101.0px;font-family:'Liberation Mono';font-size:29.0px;line-height:36px;color:#8c8c8c;white-space:pre;letter-spacing:-0.600px;-webkit-text-stroke:0.35px currentColor;">4.5 Code Block Inside Nested List</div>
<div class="t" style="position:absolute;left:2599.4px;top:1144.0px;font-family:'Liberation Mono';font-size:29.0px;line-height:36px;color:#8c8c8c;white-space:pre;letter-spacing:-0.600px;-webkit-text-stroke:0.35px currentColor;">5. Tables (GFM)</div>
<div class="t" style="position:absolute;left:2623.8px;top:1187.0px;font-family:'Liberation Mono';font-size:29.0px;line-height:36px;color:#8c8c8c;white-space:pre;letter-spacing:-0.600px;-webkit-text-stroke:0.35px currentColor;">5.1 Basic Table</div>
<div class="t" style="position:absolute;left:2623.8px;top:1230.0px;font-family:'Liberation Mono';font-size:29.0px;line-height:36px;color:#8c8c8c;white-space:pre;letter-spacing:-0.600px;-webkit-text-stroke:0.35px currentColor;">5.2 Table with Alignment</div>
<div class="t" style="position:absolute;left:2623.8px;top:1273.0px;font-family:'Liberation Mono';font-size:29.0px;line-height:36px;color:#8c8c8c;white-space:pre;letter-spacing:-0.600px;-webkit-text-stroke:0.35px currentColor;">5.3 Single Row Table</div>
<div class="t" style="position:absolute;left:2599.4px;top:1316.0px;font-family:'Liberation Mono';font-size:29.0px;line-height:36px;color:#8c8c8c;white-space:pre;letter-spacing:-0.600px;-webkit-text-stroke:0.35px currentColor;">6. Blockquotes</div>
<div class="t" style="position:absolute;left:2623.8px;top:1359.0px;font-family:'Liberation Mono';font-size:29.0px;line-height:36px;color:#8c8c8c;white-space:pre;letter-spacing:-0.600px;-webkit-text-stroke:0.35px currentColor;">6.1 Basic Quote</div>
<div class="t" style="position:absolute;left:2623.8px;top:1402.0px;font-family:'Liberation Mono';font-size:29.0px;line-height:36px;color:#8c8c8c;white-space:pre;letter-spacing:-0.600px;-webkit-text-stroke:0.35px currentColor;">6.2 Nested Quotes</div>
<div class="t" style="position:absolute;left:2623.8px;top:1445.0px;font-family:'Liberation Mono';font-size:29.0px;line-height:36px;color:#8c8c8c;white-space:pre;letter-spacing:-0.600px;-webkit-text-stroke:0.35px currentColor;">6.3 Decorated Quote</div>
<div class="t" style="position:absolute;left:2599.4px;top:1488.0px;font-family:'Liberation Mono';font-size:29.0px;line-height:36px;color:#8c8c8c;white-space:pre;letter-spacing:-0.600px;-webkit-text-stroke:0.35px currentColor;">12. Mixed Content (Past Bug: Section Bound…</div>
<div class="t" style="position:absolute;left:2623.8px;top:1531.0px;font-family:'Liberation Mono';font-size:29.0px;line-height:36px;color:#8c8c8c;white-space:pre;letter-spacing:-0.600px;-webkit-text-stroke:0.35px currentColor;">Architecture Overview</div>
<div class="t" style="position:absolute;left:2599.4px;top:1574.0px;font-family:'Liberation Mono';font-size:29.0px;line-height:36px;color:#8c8c8c;white-space:pre;letter-spacing:-0.600px;-webkit-text-stroke:0.35px currentColor;">13. Edge Cases</div>
<div class="t" style="position:absolute;left:2623.8px;top:1617.0px;font-family:'Liberation Mono';font-size:29.0px;line-height:36px;color:#8c8c8c;white-space:pre;letter-spacing:-0.600px;-webkit-text-stroke:0.35px currentColor;">13.1 Empty Code Block</div>
<div class="t" style="position:absolute;left:2623.8px;top:1660.0px;font-family:'Liberation Mono';font-size:29.0px;line-height:36px;color:#8c8c8c;white-space:pre;letter-spacing:-0.600px;-webkit-text-stroke:0.35px currentColor;">13.2 Very Long Line</div>
<div class="t" style="position:absolute;left:2623.8px;top:1703.0px;font-family:'Liberation Mono';font-size:29.0px;line-height:36px;color:#8c8c8c;white-space:pre;letter-spacing:-0.600px;-webkit-text-stroke:0.35px currentColor;">13.3 Special Characters</div>
<div class="t" style="position:absolute;left:2623.8px;top:1746.0px;font-family:'Liberation Mono';font-size:29.0px;line-height:36px;color:#8c8c8c;white-space:pre;letter-spacing:-0.600px;-webkit-text-stroke:0.35px currentColor;">13.4 Footnotes</div>
<div class="t" style="position:absolute;left:2623.8px;top:1789.0px;font-family:'Liberation Mono';font-size:29.0px;line-height:36px;color:#8c8c8c;white-space:pre;letter-spacing:-0.600px;-webkit-text-stroke:0.35px currentColor;">13.5 Consecutive Different Block Elements</div>
<div class="t" style="position:absolute;left:2599.4px;top:1832.0px;font-family:'Liberation Mono';font-size:29.0px;line-height:36px;color:#8c8c8c;white-space:pre;letter-spacing:-0.600px;-webkit-text-stroke:0.35px currentColor;">7. Note Blocks</div>
<div class="t" style="position:absolute;left:2623.8px;top:1875.0px;font-family:'Liberation Mono';font-size:29.0px;line-height:36px;color:#8c8c8c;white-space:pre;letter-spacing:-0.600px;-webkit-text-stroke:0.35px currentColor;">7.1 Note</div>
<div class="t" style="position:absolute;left:2623.8px;top:1918.0px;font-family:'Liberation Mono';font-size:29.0px;line-height:36px;color:#8c8c8c;white-space:pre;letter-spacing:-0.600px;-webkit-text-stroke:0.35px currentColor;">7.2 Tip</div>
<div class="t" style="position:absolute;left:2623.8px;top:1961.0px;font-family:'Liberation Mono';font-size:29.0px;line-height:36px;color:#8c8c8c;white-space:pre;letter-spacing:-0.600px;-webkit-text-stroke:0.35px currentColor;">7.3 Important</div>
<div class="t" style="position:absolute;left:2623.8px;top:2004.0px;font-family:'Liberation Mono';font-size:29.0px;line-height:36px;color:#8c8c8c;white-space:pre;letter-spacing:-0.600px;-webkit-text-stroke:0.35px currentColor;">7.4 Warning</div>
<div class="t" style="position:absolute;left:2623.8px;top:2047.0px;font-family:'Liberation Mono';font-size:29.0px;line-height:36px;color:#8c8c8c;white-space:pre;letter-spacing:-0.600px;-webkit-text-stroke:0.35px currentColor;">7.5 Caution</div>
</body></html>
